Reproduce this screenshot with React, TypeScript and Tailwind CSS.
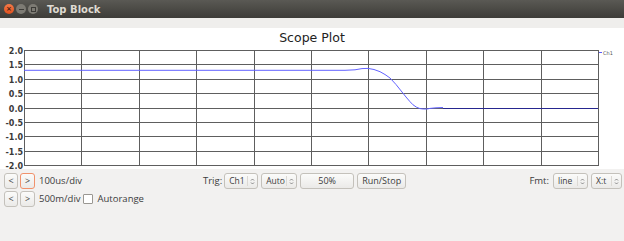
import React from 'react';

const font = { fontFamily: '"DejaVu Sans", sans-serif' };
const ui = { fontFamily: '"Open Sans", "DejaVu Sans", sans-serif' };

const Spin: React.FC = () => (
  <svg width="5" height="9" viewBox="0 0 5 9" className="shrink-0">
    <path d="M1 3.5 L2.5 2 L4 3.5" fill="none" stroke="#7a7a7a" strokeWidth="0.9" />
    <path d="M1 5.5 L2.5 7 L4 5.5" fill="none" stroke="#7a7a7a" strokeWidth="0.9" />
  </svg>
);

const Combo: React.FC<{ label: string; w: string }> = ({ label, w }) => (
  <div
    className={`${w} h-[16px] flex items-center rounded-[3px] border border-[#c4c1bb] bg-gradient-to-b from-[#fbfbfa] to-[#ebeae8] text-[8.5px] text-[#3c3c3c]`}
  >
    <span className="flex-1 pl-[4px] whitespace-nowrap">{label}</span>
    <span className="h-[10px] border-l border-[#dcd9d4] mr-[2px]" />
    <span className="pr-[2px]">
      <Spin />
    </span>
  </div>
);

const Btn: React.FC<{ label: string; w: string; focus?: boolean }> = ({ label, w, focus }) => (
  <div
    className={`${w} h-[16px] flex items-center justify-center rounded-[3px] border ${
      focus ? 'border-[#f0926c]' : 'border-[#c4c1bb]'
    } bg-gradient-to-b from-[#fbfbfa] to-[#ebeae8] text-[9px] text-[#3c3c3c]`}
  >
    {label}
  </div>
);

const left = 24;
const right = 598;
const top = 5;
const bottom = 120;

const curve: [number, number][] = [
  [24, 70.3], [345, 70.3], [355, 69.8], [362, 68.6], [368, 68.4], [374, 69.5],
  [380, 71.7], [385, 74.5], [390, 78], [396, 84.5], [402, 92], [406, 97],
  [410, 101.7], [413, 104.8], [416.7, 107.3], [420, 108.6], [423.3, 109],
  [427, 109], [430, 108.4], [436, 107.8], [443, 107.5],
];

const ScopePlot: React.FC = () => {
  const yLabels = ['2.0', '1.5', '1.0', '0.5', '0.0', '-0.5', '-1.0', '-1.5', '-2.0'];
  const hLines = yLabels.map((_, i) => Math.round(top + (i * (bottom - top)) / 8) + 0.5);
  const vLines = Array.from({ length: 11 }, (_, j) => Math.round(left + (j * (right - left)) / 10) + 0.5);
  const pts = curve.map(([x, y]) => `${x},${y - 45}`).join(' ');

  return (
    <svg width="624" height="124" className="block">
      {hLines.map((y, i) => (
        <g key={i}>
          <line x1={left} x2={right + 1} y1={y} y2={y} stroke="#5e5e5e" strokeWidth="1" />
          <text
            x={left - 1}
            y={y + 3}
            textAnchor="end"
            fontSize="8"
            fontWeight="bold"
            fill="#3a3a3a"
            fontFamily='"DejaVu Sans", sans-serif'
          >
            {yLabels[i]}
          </text>
        </g>
      ))}
      {vLines.map((x, j) => (
        <line key={j} x1={x} x2={x} y1={top} y2={bottom + 1} stroke="#5e5e5e" strokeWidth="1" />
      ))}
      <polyline points={pts} fill="none" stroke="#6262ff" strokeWidth="1" strokeLinejoin="round" />
      <line x1="443" x2={right} y1={hLines[4]} y2={hLines[4]} stroke="#26268f" strokeWidth="1.2" />
      <line x1="599" x2="602" y1="7.5" y2="7.5" stroke="#5a5aff" strokeWidth="1" />
      <text x="603" y="9.5" fontSize="5" fill="#555" fontFamily='"DejaVu Sans", sans-serif'>
        Ch1
      </text>
    </svg>
  );
};

const App: React.FC = () => {
  return (
    <div className="w-[624px] h-[241px] bg-[#f2f1f0] overflow-hidden" style={font}>
      <div className="h-[18px] flex items-center bg-gradient-to-b from-[#5a5954] to-[#3d3c38]">
        <div className="flex items-center gap-[2px] pl-[4px]">
          <div className="w-[10px] h-[10px] rounded-full bg-gradient-to-b from-[#f47a48] to-[#e0501c] flex items-center justify-center text-[7px] leading-none text-[#4a2010] font-bold">
            ×
          </div>
          <div className="w-[10px] h-[10px] rounded-full bg-[#7d7b74] flex items-center justify-center">
            <div className="w-[5px] h-[1px] bg-[#3c3b37]" />
          </div>
          <div className="w-[10px] h-[10px] rounded-full bg-[#7d7b74] flex items-center justify-center">
            <div className="w-[5px] h-[5px] border border-[#3c3b37]" />
          </div>
        </div>
        <span className="ml-[9px] text-[10px] font-bold text-[#dfdbd2]">Top Block</span>
      </div>

      <div className="h-[10px] bg-[#efeeec]" />

      <div className="h-[141px] bg-white flex flex-col">
        <div className="h-[17px] pt-[3px] text-center text-[12.5px] leading-[14px] text-[#222]">Scope Plot</div>
        <ScopePlot />
      </div>

      <div className="pt-[4px] pl-[4px] pr-[2px] flex flex-col gap-[2px]" style={ui}>
        <div className="flex items-center">
          <div className="w-[199px] flex items-center gap-[2px]">
            <Btn label="<" w="w-[14px]" />
            <Btn label=">" w="w-[15px]" focus />
            <span className="ml-[2px] text-[9.5px] text-[#3c3c3c]">100us/div</span>
          </div>
          <div className="flex items-center gap-[3px]">
            <span className="mr-[-1px] text-[9.5px] text-[#3c3c3c]">Trig:</span>
            <Combo label="Ch1" w="w-[34px]" />
            <Combo label="Auto" w="w-[36px]" />
            <Btn label="50%" w="w-[54px]" />
            <Btn label="Run/Stop" w="w-[49px]" />
          </div>
          <div className="flex-1" />
          <div className="flex items-center gap-[3px]">
            <span className="mr-[1px] text-[9.5px] text-[#3c3c3c]">Fmt:</span>
            <Combo label="line" w="w-[35px]" />
            <Combo label="X:t" w="w-[31px]" />
          </div>
        </div>
        <div className="flex items-center gap-[2px]">
          <Btn label="<" w="w-[14px]" />
          <Btn label=">" w="w-[15px]" />
          <span className="ml-[2px] text-[9.5px] text-[#3c3c3c]">500m/div</span>
          <span className="w-[10px] h-[10px] border border-[#9a9792] rounded-[1px] bg-white" />
          <span className="ml-[3px] text-[9.5px] text-[#3c3c3c]">Autorange</span>
        </div>
      </div>
    </div>
  );
};

export default App;
